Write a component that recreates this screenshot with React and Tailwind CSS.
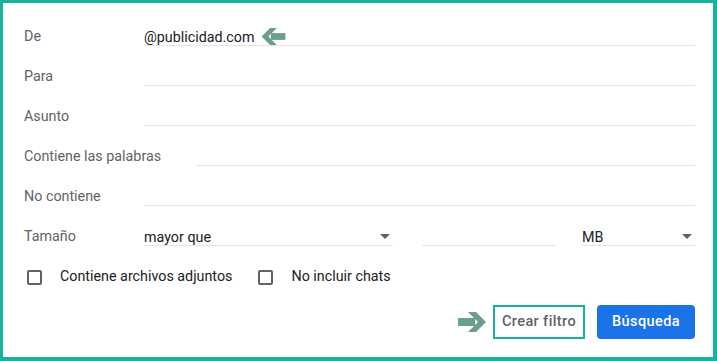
import { Fragment } from 'react';

const font = { fontFamily: 'Roboto, "Liberation Sans", sans-serif' };

function Arrow({ dir = 'right', className = '' }) {
  return (
    <svg viewBox="0 0 28 20" className={className} style={dir === 'left' ? { transform: 'scaleX(-1)' } : undefined}>
      <path d="M0 6H17V14H0Z" fill="#6b9e8f" />
      <path d="M10 0H18L28 10L18 20H10L20 10Z" fill="#6b9e8f" />
    </svg>
  );
}

function Caret() {
  return (
    <svg viewBox="0 0 10 5" className="h-[5px] w-[10px] shrink-0">
      <path d="M0 0H10L5 5Z" fill="#5f6368" />
    </svg>
  );
}

function Row({ label, labelWidth = 'w-[120px]', children }) {
  return (
    <div className="flex h-10 items-center">
      <div className={`${labelWidth} shrink-0 whitespace-nowrap text-[14.3px] text-[#5f6368]`}>{label}</div>
      {children}
    </div>
  );
}

function Field({ children }) {
  return (
    <div className="flex h-[18px] flex-1 items-center border-b border-[#e3e3e3] text-[14.3px] leading-[18px] text-[#202124]">
      {children}
    </div>
  );
}

function Checkbox({ label }) {
  return (
    <div className="flex items-center">
      <span className="ml-[3px] h-[15px] w-[15px] rounded-[2px] border-2 border-[#5f6368]"></span>
      <span className="ml-[18px] text-[14.3px] text-[#202124]">{label}</span>
    </div>
  );
}

function App() {
  return (
    <div className="h-[361px] w-[717px] border-[3px] border-r-4 border-b-4 border-[#17b29c] bg-white pl-[21px] pr-[18px] pt-[14px]" style={font}>
      <Row label="De">
        <Field>
          <span>@publicidad.com</span>
          <Arrow dir="left" className="ml-[6px] h-[17px] w-[25px]" />
        </Field>
      </Row>
      <Row label="Para">
        <Field />
      </Row>
      <Row label="Asunto">
        <Field />
      </Row>
      <Row label="Contiene las palabras" labelWidth="w-[172px]">
        <Field />
      </Row>
      <Row label="No contiene">
        <Field />
      </Row>
      <Row label="Tamaño">
        <Fragment>
          <div className="flex h-[18px] w-[249px] items-center justify-between border-b border-[#e3e3e3] pr-[3px] text-[14.3px] leading-[18px] text-[#202124]">
            <span>mayor que</span>
            <Caret />
          </div>
          <div className="ml-[29px] h-[18px] w-[134px] border-b border-[#e3e3e3]"></div>
          <div className="ml-[26px] flex h-[18px] flex-1 items-center justify-between border-b border-[#e3e3e3] pr-[3px] text-[14.3px] leading-[18px] text-[#202124]">
            <span>MB</span>
            <Caret />
          </div>
        </Fragment>
      </Row>
      <div className="flex h-10 items-center gap-[23px]">
        <Checkbox label="Contiene archivos adjuntos" />
        <Checkbox label="No incluir chats" />
      </div>
      <div className="mt-[8px] flex items-center justify-end">
        <Arrow className="h-[20px] w-[28px]" />
        <button className="ml-[7px] h-[34px] w-[92px] border-2 border-[#17b29c] text-[14.5px] font-medium tracking-[0.4px] text-[#5f6368]">
          Crear filtro
        </button>
        <button className="ml-[12px] h-[34px] w-[98px] rounded-[4px] bg-[#1a73e8] text-[14.5px] font-medium tracking-[0.4px] text-white">
          Búsqueda
        </button>
      </div>
    </div>
  );
}

export default App;
